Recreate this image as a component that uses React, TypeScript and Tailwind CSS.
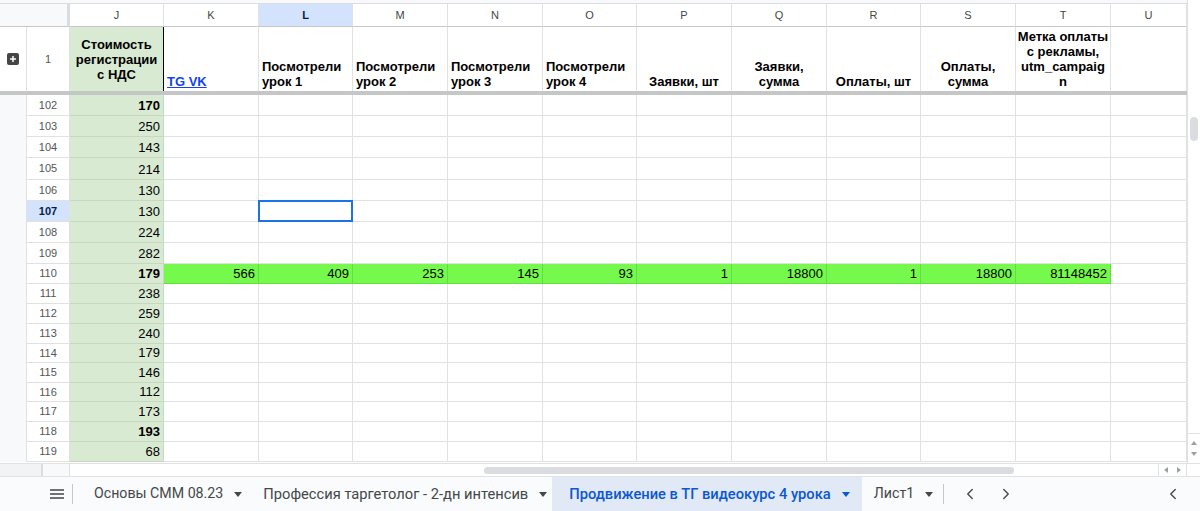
import React from 'react';
import { ChevronLeft, ChevronRight } from 'lucide-react';

const W: Record<number, string> = { 94: 'w-[94px]', 95: 'w-[95px]', 76: 'w-[76px]' };
const cols = [
  { l: 'J', w: 94 }, { l: 'K', w: 95 }, { l: 'L', w: 94 }, { l: 'M', w: 95 },
  { l: 'N', w: 95 }, { l: 'O', w: 94 }, { l: 'P', w: 95 }, { l: 'Q', w: 95 },
  { l: 'R', w: 94 }, { l: 'S', w: 95 }, { l: 'T', w: 95 }, { l: 'U', w: 76 },
];

const rows = [
  { n: 102, j: '170', b: true, h: 'h-[21px]' },
  { n: 103, j: '250', h: 'h-[21px]' },
  { n: 104, j: '143', h: 'h-[21px]' },
  { n: 105, j: '214', h: 'h-[22px]' },
  { n: 106, j: '130', h: 'h-[21px]' },
  { n: 107, j: '130', h: 'h-[21px]', active: true },
  { n: 108, j: '224', h: 'h-[21px]' },
  { n: 109, j: '282', h: 'h-[21px]' },
  { n: 110, j: '179', b: true, h: 'h-[20px]', green: ['566', '409', '253', '145', '93', '1', '18800', '1', '18800', '81148452'] },
  { n: 111, j: '238', h: 'h-[20px]' },
  { n: 112, j: '259', h: 'h-[20px]' },
  { n: 113, j: '240', h: 'h-[20px]' },
  { n: 114, j: '179', h: 'h-[19px]' },
  { n: 115, j: '146', h: 'h-[20px]' },
  { n: 116, j: '112', h: 'h-[19px]' },
  { n: 117, j: '173', h: 'h-[20px]' },
  { n: 118, j: '193', b: true, h: 'h-[20px]' },
  { n: 119, j: '68', h: 'h-[20px]' },
];

function Tab({ label, active, pad }: { label: string; active?: boolean; pad: string }) {
  return (
    <div
      className={
        'h-full flex items-center gap-[11px] whitespace-nowrap ' + pad + ' ' +
        (active ? 'bg-[#e1e9f7] text-[#0b57d0] font-medium' : 'text-[#444746]')
      }
    >
      <span>{label}</span>
      {active ? (
        <span className="inline-block w-0 h-0 border-x-[4px] border-x-transparent border-t-[5px] border-t-[#0b57d0]" />
      ) : (
        <span className="inline-block w-0 h-0 border-x-[4px] border-x-transparent border-t-[5px] border-t-[#444746]" />
      )}
    </div>
  );
}

export default function App() {
  return (
    <div className="w-[1200px] h-[511px] overflow-hidden bg-white flex flex-col" style={{ fontFamily: '"Liberation Sans", Arial, sans-serif' }}>
      <div className="flex h-[463px]">
        {/* grid */}
        <div className="w-[1187px] flex flex-col">
          <div className="h-[4px] bg-[#f8f9fa] border-b border-[#dadce0] box-border" />
          {/* column header */}
          <div className="flex h-[23px] text-[11px] text-[#444746]">
            <div className="w-[27px] shrink-0 bg-[#f8f9fa] border-b border-[#c7c7c7]" />
            <div className="w-[43px] shrink-0 bg-[#f8f9fa] border-r-[3px] border-b border-r-[#dadce0] border-b-[#c7c7c7]" />
            {cols.map((c) => (
              <div
                key={c.l}
                className={
                  W[c.w] +
                  ' shrink-0 flex items-center justify-center border-r border-b border-r-[#e1e1e1] border-b-[#c7c7c7] ' +
                  (c.l === 'L' ? 'bg-[#d3e3fd] font-bold text-[#041e49]' : 'bg-white')
                }
              >
                {c.l}
              </div>
            ))}
          </div>
          {/* row 1 */}
          <div className="flex h-[64px] text-[13px] font-bold text-black leading-[15px]">
            <div className="w-[27px] shrink-0 bg-white border-r border-[#e1e1e1] flex items-center justify-center">
              <div className="w-[12px] h-[12px] rounded-[2px] bg-[#444746] flex items-center justify-center">
                <svg width="8" height="8" viewBox="0 0 8 8">
                  <path d="M4 1v6M1 4h6" stroke="#fff" strokeWidth="1.5" />
                </svg>
              </div>
            </div>
            <div className="w-[43px] shrink-0 flex items-center justify-center text-[11px] font-normal text-[#555555] border-r border-[#e1e1e1]">1</div>
            <div className="w-[94px] shrink-0 bg-[#d9ead3] border-r border-r-black flex items-center justify-center text-center">
              <span>Стоимость<br />регистрации<br />с НДС</span>
            </div>
            <div className="w-[95px] shrink-0 border-r border-[#e1e1e1] flex items-end pl-[3px] pb-[2px]">
              <span className="text-[#1144ee] underline">TG VK</span>
            </div>
            {[1, 2, 3, 4].map((n) => (
              <div key={n} className={(n === 1 || n === 4 ? 'w-[94px]' : 'w-[95px]') + ' shrink-0 border-r border-[#e1e1e1] flex items-end pl-[3px] pb-[2px]'}>
                <span>Посмотрели<br />урок {n}</span>
              </div>
            ))}
            <div className="w-[95px] shrink-0 border-r border-[#e1e1e1] flex items-end justify-center pb-[2px]">Заявки, шт</div>
            <div className="w-[95px] shrink-0 border-r border-[#e1e1e1] flex items-end justify-center text-center pb-[2px]">
              <span>Заявки,<br />сумма</span>
            </div>
            <div className="w-[94px] shrink-0 border-r border-[#e1e1e1] flex items-end justify-center pb-[2px]">Оплаты, шт</div>
            <div className="w-[95px] shrink-0 border-r border-[#e1e1e1] flex items-end justify-center text-center pb-[2px]">
              <span>Оплаты,<br />сумма</span>
            </div>
            <div className="w-[95px] shrink-0 border-r border-[#e1e1e1] flex items-center justify-center text-center">
              <span>Метка оплаты<br />с рекламы,<br />utm_campaig<br />n</span>
            </div>
            <div className="w-[76px] shrink-0 border-r border-[#e1e1e1]" />
          </div>
          {/* freeze bar */}
          <div className="h-[4px] bg-[#c4c7c5]" />
          {/* data rows */}
          {rows.map((r) => (
            <div key={r.n} className={'flex shrink-0 ' + r.h}>
              <div className="w-[27px] shrink-0 bg-[#f8f9fa] border-r border-[#e1e1e1]" />
              <div
                className={
                  'w-[43px] shrink-0 flex items-center justify-center text-[11px] border-r border-b border-[#e1e1e1] ' +
                  (r.active ? 'bg-[#d3e3fd] font-bold text-[#041e49]' : 'bg-white text-[#555555]')
                }
              >
                {r.n}
              </div>
              <div
                className={
                  'w-[94px] shrink-0 bg-[#d9ead3] border-r border-b border-[#c8d6c2] flex items-end justify-end pr-[3px] pb-[1px] text-[13px] text-black leading-[16px] ' +
                  (r.b ? 'font-bold' : '')
                }
              >
                {r.j}
              </div>
              {cols.slice(1).map((c, i) => {
                const g = r.green && i < 10 ? r.green[i] : null;
                const sel = r.active && c.l === 'L';
                return (
                  <div
                    key={c.l}
                    className={
                      W[c.w] +
                      ' shrink-0 relative flex items-end justify-end pr-[3px] pb-[1px] text-[13px] text-black leading-[16px] border-r border-b ' +
                      (g !== null ? 'bg-[#75f94c] border-[#62df3e]' : 'bg-white border-[#e1e1e1]')
                    }
                  >
                    {g}
                    {sel && <div className="absolute -left-[1px] -top-[1px] -right-[1px] -bottom-[1px] border-2 border-[#1a73e8]" />}
                  </div>
                );
              })}
            </div>
          ))}
        </div>
        {/* vertical scrollbar */}
        <div className="w-[13px] shrink-0 bg-white border-l border-[#e1e1e1] flex flex-col">
          <div className="h-[117px]" />
          <div className="mx-auto w-[8px] h-[24px] rounded-full bg-[#dadce0]" />
          <div className="flex-1" />
          <div className="border-t border-[#e1e1e1] h-[30px] flex flex-col items-center justify-center gap-[7px]">
            <span className="inline-block w-0 h-0 border-x-[3px] border-x-transparent border-b-[4px] border-b-[#9aa0a6]" />
            <span className="inline-block w-0 h-0 border-x-[3px] border-x-transparent border-t-[4px] border-t-[#9aa0a6]" />
          </div>
        </div>
      </div>
      {/* horizontal scrollbar */}
      <div className="flex h-[13px] shrink-0 border-t border-[#e1e1e1] box-border">
        <div className="w-[43px] bg-[#f1f3f4] border-r-2 border-[#dadce0]" />
        <div className="w-[27px] bg-[#f8f9fa] border-r border-[#e1e1e1]" />
        <div className="flex-1 flex items-center pl-[414px]">
          <div className="w-[530px] h-[7px] rounded-full bg-[#dadce0]" />
        </div>
        <div className="w-[29px] flex items-center justify-around border-l border-r border-[#e1e1e1]">
          <span className="inline-block w-0 h-0 border-y-[3px] border-y-transparent border-r-[4px] border-r-[#9aa0a6]" />
          <span className="inline-block w-0 h-0 border-y-[3px] border-y-transparent border-l-[4px] border-l-[#9aa0a6]" />
        </div>
        <div className="w-[13px]" />
      </div>
      {/* tab bar */}
      <div className="flex-1 flex items-center bg-[#f9fbfd] border-t border-[#e1e3e1]" style={{ fontFamily: 'Roboto, "Liberation Sans", sans-serif' }}>
        <div className="w-[44px]" />
        <div className="w-[26px] flex items-center justify-center">
          <svg width="14" height="10" viewBox="0 0 14 10">
            <path d="M0 1h14M0 5h14M0 9h14" stroke="#444746" strokeWidth="1.6" />
          </svg>
        </div>
        <div className="w-px h-[20px] bg-[#c4c7c5] ml-[2px] mr-[6px]" />
        <Tab label="Основы СММ 08.23" pad="pl-[15px] pr-[5px] text-[14.2px]" />
        <Tab label="Профессия таргетолог - 2-дн интенсив" pad="pl-[16px] pr-[5px] text-[14.7px]" />
        <Tab label="Продвижение в ТГ видеокурс 4 урока" active pad="pl-[17px] pr-[12px] text-[14.7px]" />
        <Tab label="Лист1" pad="pl-[12px] pr-[8px] text-[14.2px]" />
        <div className="w-px h-[20px] bg-[#c4c7c5] ml-[2px]" />
        <div className="w-[50px] flex justify-center ml-[1px]">
          <ChevronLeft size={18} color="#444746" strokeWidth={1.8} />
        </div>
        <div className="w-[22px] flex justify-center">
          <ChevronRight size={18} color="#444746" strokeWidth={1.8} />
        </div>
        <div className="flex-1" />
        <div className="w-[18px] flex justify-center mr-[18px]">
          <ChevronLeft size={18} color="#444746" strokeWidth={1.8} />
        </div>
      </div>
    </div>
  );
}
